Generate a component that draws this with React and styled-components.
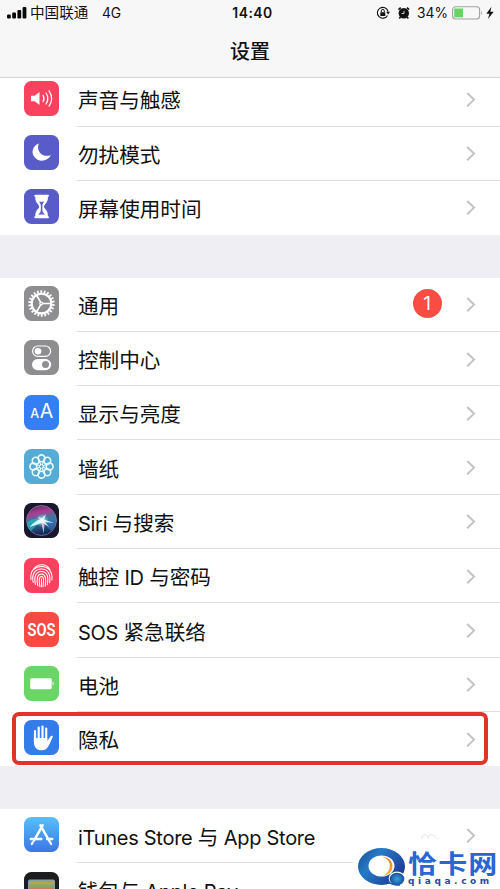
import React from 'react';
import styled, { createGlobalStyle } from 'styled-components';

const Global = createGlobalStyle`
  * { box-sizing: border-box; }
  body { margin: 0; background: #fff; font-family: Inter, "Noto Sans CJK SC", sans-serif; color: #111; }
`;

const Screen = styled.main`
  position: relative;
  width: 500px;
  height: 889px;
  overflow: hidden;
  background: #efeef3;
`;
const Header = styled.header`
  height: 78px;
  background: #f7f7f8;
  border-bottom: 1px solid #d5d5d7;
`;
const StatusBar = styled.div`
  display: grid;
  grid-template-columns: 1fr auto 1fr;
  align-items: center;
  height: 26px;
  padding: 0 5px 0 7px;
  font-size: 13.6px;
  line-height: 26px;
`;
const Carrier = styled.div`
  display: flex;
  align-items: center;
  gap: 3px;
  span { font-size: 14.6px; }
  span + span { margin-left: 10.5px; font-size: 13.8px; letter-spacing: -0.1px; }
`;
const Clock = styled.div`
  font-weight: 600;
  font-size: 13.9px;
  letter-spacing: 0.5px;
  margin-left: 3px;
`;
const StatusRight = styled.div`
  display: flex;
  justify-content: flex-end;
  align-items: center;
  span { margin: 0 4px 0 7px; font-size: 13.8px; }
`;
const Title = styled.h1`
  margin: 10px 0 0;
  font-size: 20px;
  line-height: 32px;
  font-weight: 500;
  text-align: center;
`;
const Group = styled.section`
  background: #fff;
  overflow: hidden;
  margin-bottom: 42.5px;
  & > :first-child { margin-top: ${p => (p.$scrolled ? '-5.8px' : '0')}; }
`;
const Row = styled.div`
  position: relative;
  display: flex;
  height: 54.3px;
  padding-left: 24px;
`;
const Tile = styled.div`
  flex: none;
  width: 35px;
  height: 35px;
  margin: 8.5px 18px 0 0;
  border-radius: 7.5px;
  overflow: hidden;
  background: ${p => p.$bg};
  svg { display: block; }
`;
const RowBody = styled.div`
  flex: 1;
  display: flex;
  align-items: center;
  padding: 2px 24px 0 1px;
  border-bottom: 1px solid ${p => (p.$last ? 'transparent' : '#dededf')};
`;
const Label = styled.span`
  flex: 1;
  padding-top: 3px;
  font-size: 20.6px;
  line-height: 30px;
  white-space: pre;
`;
const Latin = styled.span`
  font-size: 20px;
  letter-spacing: -0.28px;
`;
const Badge = styled.span`
  width: 29px;
  height: 29px;
  margin: -3px 24.5px 0 0;
  border-radius: 50%;
  background: #f94d44;
  color: #fff;
  font-size: 19px;
  line-height: 29px;
  text-align: center;
`;
const Highlight = styled.div`
  position: absolute;
  left: 12px;
  right: 12.5px;
  top: -0.4px;
  height: 53.5px;
  border: 4px solid #e2332a;
  border-radius: 7px;
`;
const Watermark = styled.div`
  position: absolute;
  left: 353px;
  top: 846px;
  display: flex;
  width: 147px;
  height: 43px;
  padding-left: 4px;
  background: #fff;
`;
const Brand = styled.div`
  flex: none;
  display: flex;
  flex-direction: column;
  margin-left: 1px;
  white-space: nowrap;
`;
const BrandName = styled.div`
  height: 30px;
  padding-top: 4px;
  font: 700 25px/25px "Noto Sans CJK SC", sans-serif;
  letter-spacing: 1px;
  color: #2a66d2;
  transform: scaleX(1.16);
  transform-origin: left;
`;
const BrandUrl = styled.div`
  font: bold 9px/10px "DejaVu Sans", sans-serif;
  letter-spacing: 3.6px;
  color: #2b4a9e;
`;
const Wisp = styled.svg`
  margin-right: 28px;
`;

const polar = (r, deg) => {
  const a = (deg * Math.PI) / 180;
  return [17.5 + r * Math.cos(a), 17.5 + r * Math.sin(a)];
};
const Svg = ({ children }) => (
  <svg width="35" height="35" viewBox="0 0 35 35" fill="none" strokeLinecap="round" strokeLinejoin="round">{children}</svg>
);

const Sound = () => (
  <Svg>
    <path d="M7 14.7h3.7l4.8-3.8v13.2l-4.8-3.8H7z" fill="#fff" />
    <path d="M19 14.2q2 3.3 0 6.6M22 12q3.6 5.5 0 11M25 9.8q5.2 7.7 0 15.4" stroke="#fff" strokeWidth="1.25" />
  </Svg>
);
const Moon = () => (
  <Svg><path d="M14.8 8.4C8.8 10.6 7 17.1 10 21.5c4.2 6.3 13.4 5.3 17-1.5-7.8 3.4-15.500-3.7-12.200-11.600Z" fill="#fff" /></Svg>
);
const Hourglass = () => (
  <Svg>
    <path d="M11.300 6h12.600v3c0 5-3.800 6.100-3.800 8.600s3.800 3.600 3.800 8.600V29H11.300v-2.800c0-5 3.800-6.100 3.800-8.600s-3.800-3.600-3.800-8.600z" fill="#fff" />
    <path d="M11.200 6.800h12.800M11.200 28.200h12.800" stroke="#fff" strokeWidth="2" />
    <path d="M14.800 12.800h5.600c-1 1.200-2.100 2-2.100 4.800 0 3.300.2 4.600.6 6l2.300 1.900h-7.200l2.300-1.900c.4-1.400.6-2.700.6-6 0-2.800-1.100-3.600-2.100-4.800Z" fill="#595bc8" />
  </Svg>
);
const Gear = () => (
  <Svg>
    <circle cx="17.5" cy="17.5" r="9.800" stroke="#fff" strokeWidth="2.100" />
    {Array.from({ length: 22 }, (_, i) => {
      const [x1, y1] = polar(10.5, (i * 360) / 22 + 7);
      const [x2, y2] = polar(13.3, (i * 360) / 22 + 7);
      return <line key={i} x1={x1} y1={y1} x2={x2} y2={y2} stroke="#fff" strokeWidth="1.800" strokeLinecap="butt" />;
    })}
    <path d="M18 17.500h9M17.200 17.200l-4.500-7.800M17.200 17.800l-4.500 7.800" stroke="#fff" strokeWidth="1.700" />
    <circle cx="17.200" cy="17.500" r="1.900" fill="#fff" />
    <circle cx="17.200" cy="17.500" r=".7" fill="#8e8e90" />
  </Svg>
);
const Toggles = () => (
  <Svg>
    <rect x="8.600" y="6" width="18" height="10.400" rx="5.200" stroke="#fff" strokeWidth="1.200" />
    <circle cx="14" cy="11.200" r="3.300" fill="#fff" />
    <rect x="8" y="19" width="19.200" height="11.200" rx="5.600" fill="#fff" />
    <circle cx="21.500" cy="24.600" r="3.500" fill="#8e8e90" />
  </Svg>
);
const Display = () => (
  <Svg>
    <g fill="#fff" fontFamily="Inter, sans-serif" textAnchor="middle">
      <text x="10.800" y="23.300" fontSize="12.500" fontWeight="500">A</text>
      <text x="22.400" y="23.300" fontSize="19.500" fontWeight="400">A</text>
    </g>
  </Svg>
);
const Flower = () => (
  <Svg>
    {Array.from({ length: 8 }, (_, i) => {
      const [cx, cy] = polar(8.200, i * 45);
      return <circle key={i} cx={cx} cy={cy} r="3.400" stroke="#e9fbff" strokeWidth="1.600" />;
    })}
    {Array.from({ length: 8 }, (_, i) => {
      const [x1, y1] = polar(2, i * 45 + 22.5);
      const [x2, y2] = polar(7, i * 45 + 22.5);
      return <line key={i} x1={x1} y1={y1} x2={x2} y2={y2} stroke="#e9fbff" strokeWidth="1.200" />;
    })}
    <circle cx="17.500" cy="17.500" r="2" stroke="#e9fbff" />
  </Svg>
);
const Siri = () => (
  <Svg>
    <defs>
      <linearGradient id="orb" x1="0" y1="0" x2=".2" y2="1">
        <stop offset="0" stopColor="#4a2a60" /><stop offset=".3" stopColor="#ad3c93" />
        <stop offset=".55" stopColor="#347d9b" /><stop offset="1" stopColor="#15265a" />
      </linearGradient>
      <radialGradient id="glow"><stop stopColor="#fff" /><stop offset=".25" stopColor="#c6f5fb" stopOpacity=".85" /><stop offset="1" stopColor="#5bc6dc" stopOpacity="0" /></radialGradient>
    </defs>
    <circle cx="17.500" cy="17.500" r="15" fill="url(#orb)" stroke="#8d7898" strokeWidth=".8" />
    <path d="M3 20q6-7 14-2L7 28Q3 25 3 20Z" fill="#20bfc7" opacity=".65" />
    <path d="M18 18l14-4q1 8-5 14Z" fill="#387acc" opacity=".55" />
    <circle cx="18" cy="17.500" r="7" fill="url(#glow)" />
    <path d="M5.500 24q5-6 10.500-7.500l-2-3 3.500 2L22 11l-2 5.500 10 3.500-9-1 4 5-5-3.500-.5 8-2-8.500-4 1.500Z" fill="#e9fdff" opacity=".9" />
    <path d="M18 20l1.500 11 1-10Z" fill="#f3a6cf" />
  </Svg>
);
const Fingerprint = () => (
  <Svg>
    <g stroke="#fff" strokeWidth="1.050">
      <path d="M9.300 11.500C14 5.200 22 5.400 26 11.500" />
      <path d="M7 21.500C5.500 12 12 8.500 17.500 8.500S29 12.200 27.900 22" />
      <path d="M9.200 24.500C7.300 15.500 11.500 11 17.500 11s9.500 4.800 8.100 13.800" />
      <path d="M11.500 26.500c-2-8 .6-13 6-13s7.400 5 5.800 13.300" />
      <path d="M13.800 27.800c-1.800-7.600-.2-11.800 3.700-11.800s5 4.700 3.700 12.200" />
      <path d="M16 28.800c-1.500-7-.8-10.300 1.500-10.300s2.500 3.500 1.500 10.300M17.500 21v7.500" />
    </g>
  </Svg>
);
const Sos = () => (
  <Svg><text x="17.500" y="23.500" textAnchor="middle" textLength="28" lengthAdjust="spacingAndGlyphs" fill="#fff" fontFamily="Roboto, sans-serif" fontSize="17.500" fontWeight="600">SOS</text></Svg>
);
const Battery = () => (
  <Svg>
    <rect x="6.200" y="12.200" width="21.500" height="11" rx="1.400" fill="#fff" />
    <path d="M28.700 15.500q2 2.200 0 4.400z" fill="#fff" />
  </Svg>
);
const Hand = () => (
  <Svg>
    <path d="M11 11v11M14.700 7.500V19M18.500 6.500V19M22.200 8.500V20" stroke="#fff" strokeWidth="2.200" />
    <path d="M9.900 18h13.400v3c1.500-1.500 2.500-4.500 4-5.200.9-.4 1.800.2 1.400 1.200l-3.600 8c-1.600 3.600-3.800 5.300-7.500 5.300-5 0-7.700-3.300-7.700-8.300Z" fill="#fff" />
  </Svg>
);
const Store = () => (
  <Svg>
    <path d="M16.400 8.400l9 15.600M18.600 8.400l-8.500 15M6.800 22h10.500M23 22h5.200" stroke="#fff" strokeWidth="2.500" />
    <path d="M8.800 25.200l-1 1.800M26.100 25.200l1 1.800" stroke="#fff" strokeWidth="2.200" />
  </Svg>
);
const Wallet = () => (
  <Svg>
    <rect x="4" y="7.500" width="27" height="27" rx="2" fill="#85a3a4" />
    <path d="M5 10h25v4H5z" fill="#b6a454" /><path d="M5 12.500h25v4H5z" fill="#80aa68" /><path d="M5 15.500h25v10H5z" fill="#d4756a" />
  </Svg>
);

const Chevron = () => (
  <svg width="10" height="16" viewBox="0 0 10 16" fill="none">
    <path d="M1.200 1l6.800 6.600-6.800 6.600" stroke="#c3c3c7" strokeWidth="2" />
  </svg>
);

const Item = ({ icon, bg, children, last, badge, highlighted, extra, plain }) => (
  <Row>
    <Tile $bg={bg}>{icon}</Tile>
    <RowBody $last={last}>
      <Label>{children}</Label>
      {badge && <Badge>{badge}</Badge>}
      {extra}
      {!plain && <Chevron />}
    </RowBody>
    {highlighted && <Highlight />}
  </Row>
);

const Signal = () => (
  <svg width="20" height="12" viewBox="0 0 20 12" fill="#080808">
    <rect x="0" y="7.500" width="3.800" height="4" rx="1" /><rect x="5.200" y="5.500" width="3.800" height="6" rx="1" />
    <rect x="10.400" y="3" width="3.800" height="8.500" rx="1" /><rect x="15.600" y="0" width="3.800" height="11.500" rx="1" />
  </svg>
);
const StatusIcons = () => (
  <svg width="34" height="14" viewBox="0 0 34 14" fill="none">
    <path d="M11.500 9.400A5.400 5.400 0 1 1 12 5.500" stroke="#111" strokeWidth="1.100" />
    <path d="M10.200 5.800h3.800l-1.900 2.700z" fill="#111" />
    <rect x="4.300" y="6.200" width="5" height="3.700" rx=".5" fill="#111" /><path d="M5.300 6V4.900a1.500 1.500 0 0 1 3 0V6" stroke="#111" />
    <circle cx="27.800" cy="7.300" r="5.200" fill="#111" />
    <path d="M22.500 3.600l2.200-2M33.100 3.600l-2.200-2M24.500 11l-1.200 1.600M31.100 11l1.200 1.600" stroke="#111" strokeWidth="1.600" />
    <path d="M28 4.800v2.700h-2.400" stroke="#fff" strokeWidth=".8" />
  </svg>
);
const StatusBattery = () => (
  <svg width="43" height="14" viewBox="0 0 43 14" fill="none">
    <rect x=".6" y=".8" width="27" height="12.200" rx="3" stroke="#a2a2a2" strokeWidth="1.100" />
    <path d="M2.200 2.500h8.800v8.900H2.200z" fill="#67d566" /><path d="M29.100 5q2 2 0 4z" fill="#a2a2a2" />
    <path d="M39.500.8l-5.200 7h3.200l-1.600 5.200 5.800-7.200h-3.400z" fill="#111" />
  </svg>
);
const BrandMark = () => (
  <svg width="50" height="43" viewBox="0 0 50 43" fill="none">
    <defs>
      <linearGradient id="mark" x1="0" y1="0" x2="1" y2=".6"><stop stopColor="#174d96" /><stop offset=".4" stopColor="#267bc6" /><stop offset="1" stopColor="#1e3b96" /></linearGradient>
      <linearGradient id="flame" x1="0" y1="0" x2="0" y2="1"><stop stopColor="#e97a22" /><stop offset="1" stopColor="#fbb32b" /></linearGradient>
      <radialGradient id="bead"><stop stopColor="#36a5e5" /><stop offset="1" stopColor="#1a4d9c" /></radialGradient>
    </defs>
    <ellipse cx="24.500" cy="20.500" rx="23.500" ry="18.500" fill="url(#mark)" />
    <ellipse cx="24.500" cy="20" rx="13" ry="10.500" fill="#fff" />
    <path d="M25 10.500q10.500 1.500 10.500 9.500T26 30Q33 26 32.800 19.500T25 10.500Z" fill="url(#flame)" />
    <ellipse cx="40" cy="32.500" rx="8.300" ry="7" fill="#fff" />
    <ellipse cx="40" cy="33" rx="7.300" ry="6.200" fill="url(#bead)" />
    <path d="M30 35q6 5 13 4" stroke="#245dac" strokeWidth="1.400" />
  </svg>
);
const Squiggle = () => (
  <Wisp width="18" height="8" viewBox="0 0 18 8" fill="none"><path d="M1 7q4-9 8 0M8 5q3-6 9 2" stroke="#e5e5e5" /></Wisp>
);

export default function App() {
  return (
    <Screen>
      <Global />
      <Header>
        <StatusBar>
          <Carrier><Signal /><span>中国联通</span><span>4G</span></Carrier>
          <Clock>14:40</Clock>
          <StatusRight><StatusIcons /><span>34%</span><StatusBattery /></StatusRight>
        </StatusBar>
        <Title>设置</Title>
      </Header>
      <Group $scrolled>
        <Item icon={<Sound />} bg="#fa415d">声音与触感</Item>
        <Item icon={<Moon />} bg="#595bc8">勿扰模式</Item>
        <Item icon={<Hourglass />} bg="#595bc8" last>屏幕使用时间</Item>
      </Group>
      <Group>
        <Item icon={<Gear />} bg="#8e8e90" badge="1">通用</Item>
        <Item icon={<Toggles />} bg="#8e8e90">控制中心</Item>
        <Item icon={<Display />} bg="#347ff4">显示与亮度</Item>
        <Item icon={<Flower />} bg="#55abd6">墙纸</Item>
        <Item icon={<Siri />} bg="#17172d"><Latin>Siri </Latin>与搜索</Item>
        <Item icon={<Fingerprint />} bg="#fa415d">触控<Latin> ID </Latin>与密码</Item>
        <Item icon={<Sos />} bg="#f94a43"><Latin>SOS </Latin>紧急联络</Item>
        <Item icon={<Battery />} bg="#6bd568">电池</Item>
        <Item icon={<Hand />} bg="#347ce9" last highlighted>隐私</Item>
      </Group>
      <Group>
        <Item icon={<Store />} bg="linear-gradient(#58c0f6, #3b76e5)" extra={<Squiggle />}><Latin>iTunes Store </Latin>与<Latin> App Store</Latin></Item>
        <Item icon={<Wallet />} bg="#1d1d1f" plain>钱包与<Latin> Apple Pay</Latin></Item>
      </Group>
      <Watermark>
        <BrandMark />
        <Brand><BrandName>恰卡网</BrandName><BrandUrl>qiaqa.com</BrandUrl></Brand>
      </Watermark>
    </Screen>
  );
}
